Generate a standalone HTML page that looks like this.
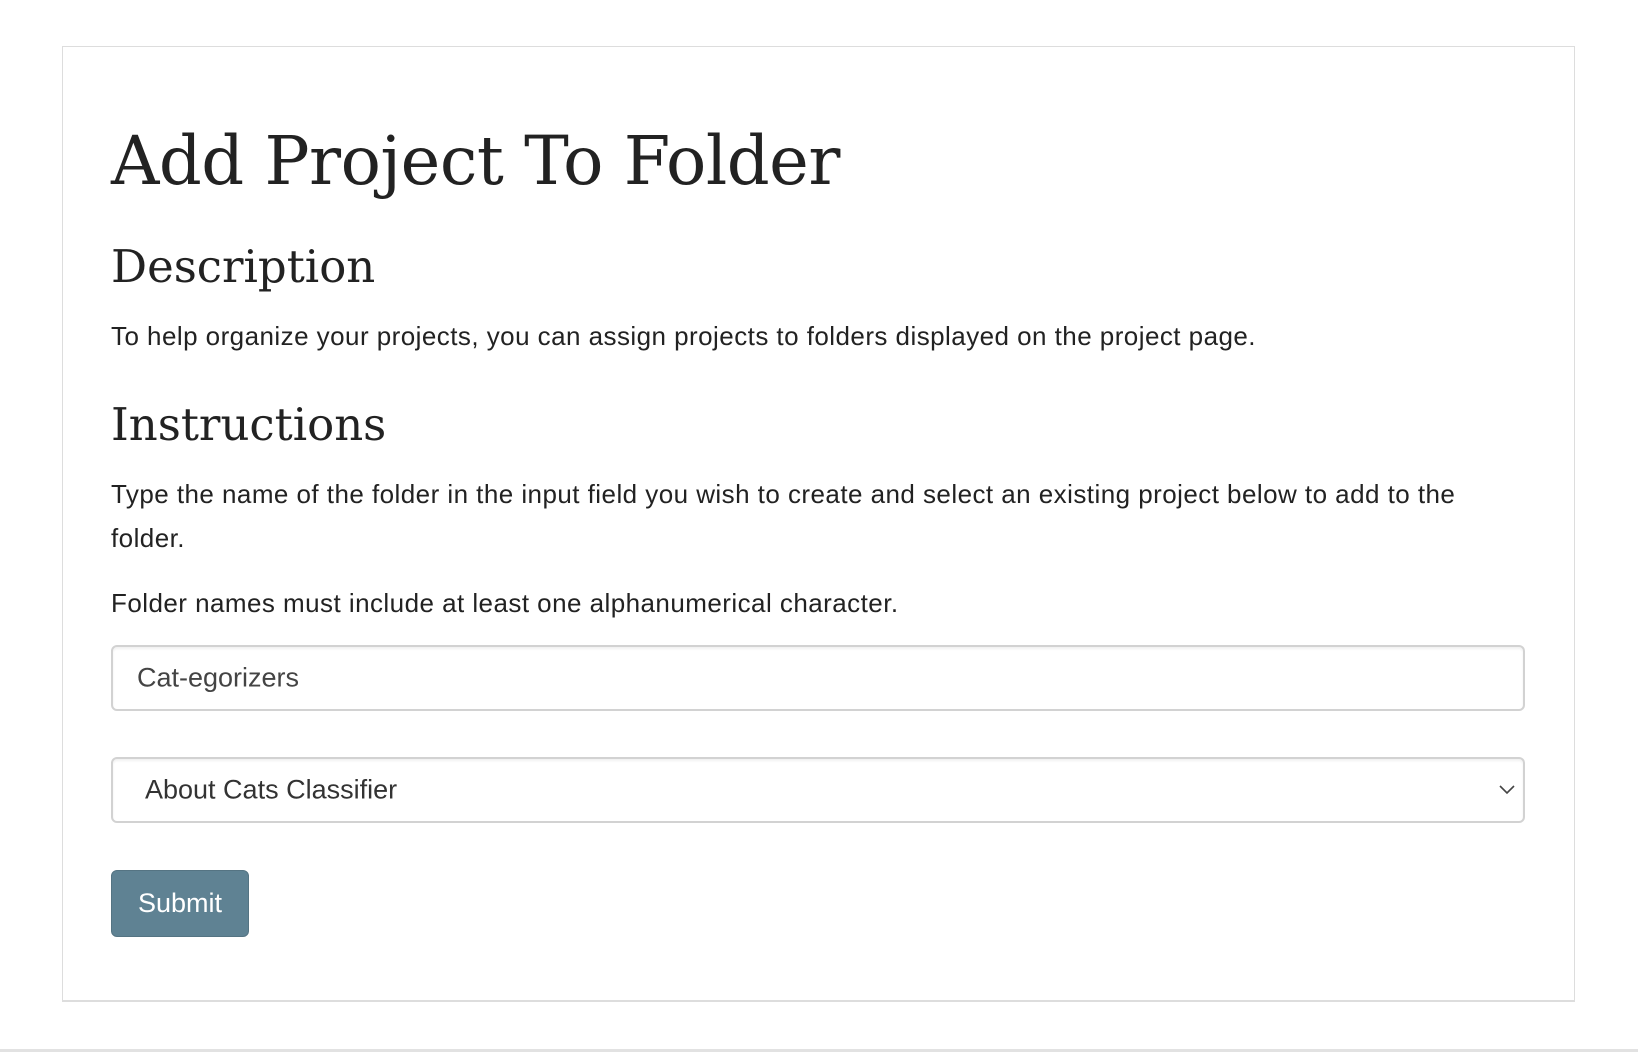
<!DOCTYPE html>
<html><head><meta charset="utf-8"><style>
html,body{margin:0;padding:0;background:#fff;width:1638px;height:1052px;overflow:hidden;position:relative}
body{font-family:"Liberation Sans",sans-serif;color:#222}
.panel{position:absolute;left:62px;top:46px;width:1513px;height:956px;border:1px solid #ddd;border-bottom:2px solid #ddd;box-sizing:border-box}
.bar{position:absolute;left:0;top:1049px;width:1638px;height:3px;background:#e2e2e2}
.t{position:absolute;left:111px;white-space:nowrap;line-height:1}
h1,h2{margin:0;font-weight:normal;font-family:"DejaVu Serif","Liberation Serif",serif}
.p{font-size:26px;letter-spacing:0.45px;color:#222}
.box{position:absolute;left:111px;width:1414px;height:66px;border:2px solid #d2d2d2;border-radius:6px;box-sizing:border-box;box-shadow:inset 0 2px 2px rgba(0,0,0,.06)}
.box span{position:absolute;top:50%;transform:translateY(-50%);font-size:27px;color:#444}
.btn{position:absolute;left:111px;top:870px;width:138px;height:67px;background:#5f8293;border:1px solid #557483;border-radius:6px;box-sizing:border-box;color:#fff;font-size:27px;text-align:center;line-height:65px}
</style></head><body>
<div class="panel"></div>
<div class="bar"></div>
<h1 class="t" style="top:128px;font-size:67px;letter-spacing:-0.5px;color:#222">Add Project To Folder</h1>
<h2 class="t" style="top:244px;font-size:45px;letter-spacing:0px">Description</h2>
<div class="t p" style="top:323px">To help organize your projects, you can assign projects to folders displayed on the project page.</div>
<h2 class="t" style="top:402px;font-size:45px;letter-spacing:0px">Instructions</h2>
<div class="t p" style="top:481px">Type the name of the folder in the input field you wish to create and select an existing project below to add to the</div>
<div class="t p" style="top:525px">folder.</div>
<div class="t p" style="top:590px">Folder names must include at least one alphanumerical character.</div>
<div class="box" style="top:645px"><span style="left:24px">Cat-egorizers</span></div>
<div class="box" style="top:757px"><span style="left:32px;color:#333">About Cats Classifier</span>
<svg style="position:absolute;right:8px;top:26px" width="16" height="10" viewBox="0 0 16 10"><path d="M1 1 L8 8 L15 1" fill="none" stroke="#444" stroke-width="1.6"/></svg></div>
<div class="btn">Submit</div>
</body></html>
